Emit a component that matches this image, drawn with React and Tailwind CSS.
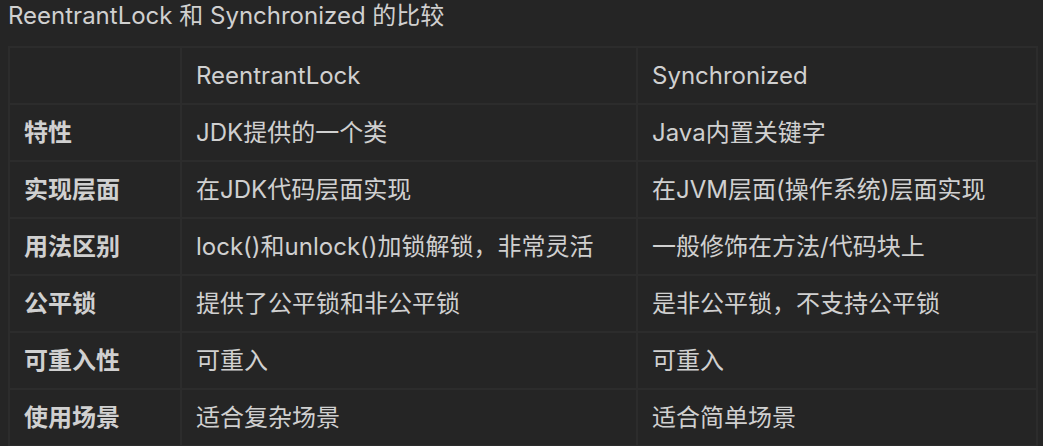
const rows = [
  ["特性", "JDK提供的一个类", "Java内置关键字"],
  ["实现层面", "在JDK代码层面实现", "在JVM层面(操作系统)层面实现"],
  ["用法区别", "lock()和unlock()加锁解锁，非常灵活", "一般修饰在方法/代码块上"],
  ["公平锁", "提供了公平锁和非公平锁", "是非公平锁，不支持公平锁"],
  ["可重入性", "可重入", "可重入"],
  ["使用场景", "适合复杂场景", "适合简单场景"],
];

const font = { fontFamily: "Inter, 'Noto Sans CJK SC', sans-serif" };

const App = () => {
  return (
    <div className="w-[1043px] h-[446px] overflow-hidden bg-[#252525] text-[#d0d0d0]" style={font}>
      <h2 className="pl-[8px] pt-[0px] h-[46px] text-[24px] leading-[32px] font-normal">
        ReentrantLock 和 Synchronized 的比较
      </h2>
      <table className="ml-[8px] w-[1030px] border-collapse text-[24px] leading-[33px]">
        <thead>
          <tr className="h-[57px]">
            <th className="w-[172px] border-2 border-[#2c2c2c]"></th>
            <th className="w-[456px] border-2 border-[#2c2c2c] px-[14px] text-left font-normal">ReentrantLock</th>
            <th className="border-2 border-[#2c2c2c] px-[14px] text-left font-normal">Synchronized</th>
          </tr>
        </thead>
        <tbody>
          {rows.map((r) => (
            <tr key={r[0]} className="h-[57px]">
              <td className="border-2 border-[#2c2c2c] px-[14px] font-semibold">{r[0]}</td>
              <td className="border-2 border-[#2c2c2c] px-[14px]">{r[1]}</td>
              <td className="border-2 border-[#2c2c2c] px-[14px]">{r[2]}</td>
            </tr>
          ))}
        </tbody>
      </table>
    </div>
  );
};

export default App;
